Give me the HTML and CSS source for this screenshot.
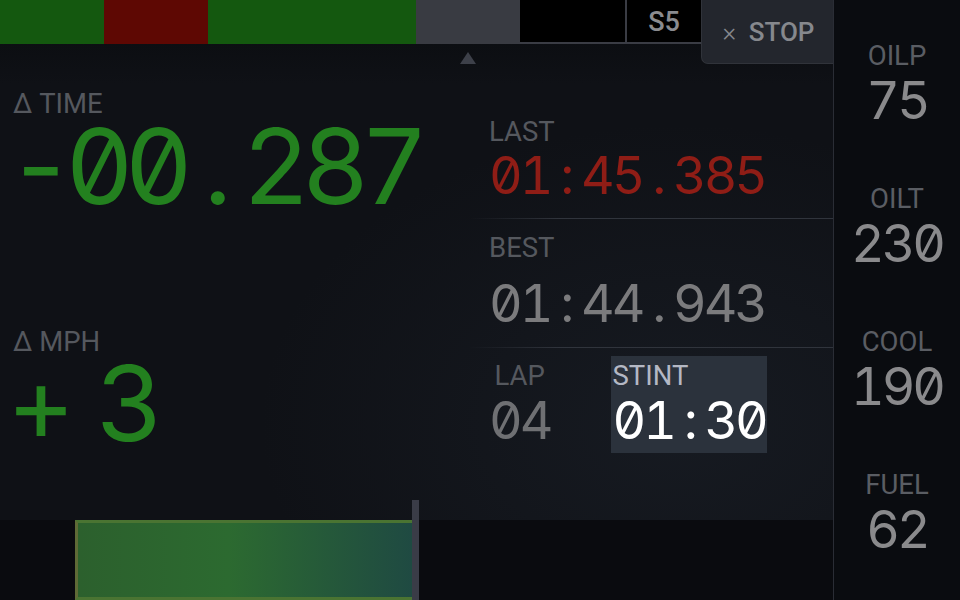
FILE: index.html
```html
<!DOCTYPE html>
<html lang="en">
<head>
    <meta charset="UTF-8">
    <meta name="viewport" content="width=device-width, initial-scale=1.0">
    <title>Lap Timer</title>
    <link rel="stylesheet" href="styles.css">
</head>
<body>
    <div class="dash">
        <div class="left">
            <div class="topbar">
                <div class="seg green" style="width: 104px;"></div>
                <div class="seg red" style="width: 104px;"></div>
                <div class="seg green" style="width: 208px;"></div>
                <div class="seg gray" style="width: 104px;"></div>
                <div class="seg empty" style="width: 107px;"></div>
                <div class="seg sector">S5</div>
                <button class="stop"><span class="x">×</span> STOP</button>
            </div>

            <div class="main">
                <span class="caret"></span>

                <div class="deltas">
                    <div class="delta">
                        <div class="label">Δ TIME</div>
                        <div class="big num"><span class="p">-</span>00<span class="p">.</span>287</div>
                    </div>
                    <div class="delta mph">
                        <div class="label">Δ MPH</div>
                        <div class="big num plus">+3</div>
                    </div>
                </div>

                <div class="times">
                    <div class="row last">
                        <div class="label">LAST</div>
                        <div class="time num red-text">01<span class="p">:</span>45<span class="p">.</span>385</div>
                    </div>
                    <div class="row best">
                        <div class="label">BEST</div>
                        <div class="time num">01<span class="p">:</span>44<span class="p">.</span>943</div>
                    </div>
                    <div class="row split">
                        <div class="lap">
                            <div class="label">LAP</div>
                            <div class="time num dim">04</div>
                        </div>
                        <div class="stint">
                            <div class="label">STINT</div>
                            <div class="time num">01<span class="p">:</span>30</div>
                        </div>
                    </div>
                </div>
            </div>

            <div class="bottom">
                <div class="fill" style="width: 337px;"></div>
                <span class="marker"></span>
            </div>
        </div>

        <aside class="gauges">
            <div class="gauge">
                <div class="label">OILP</div>
                <div class="val num">75</div>
            </div>
            <div class="gauge">
                <div class="label">OILT</div>
                <div class="val num">230</div>
            </div>
            <div class="gauge">
                <div class="label">COOL</div>
                <div class="val num">190</div>
            </div>
            <div class="gauge">
                <div class="label">FUEL</div>
                <div class="val num">62</div>
            </div>
        </aside>
    </div>
</body>
</html>
```

FILE: styles.css
```css
body {
    margin: 0;
    width: 960px;
    height: 600px;
    overflow: hidden;
    background-color: #0f1116;
    font-family: Roboto, "Liberation Sans", sans-serif;
}
.dash {
    display: flex;
    height: 600px;
}
.left {
    width: 833px;
    display: flex;
    flex-direction: column;
}

/* sector bar */
.topbar {
    height: 44px;
    display: flex;
    flex-shrink: 0;
    position: relative;
    z-index: 2;
}
.seg {
    height: 44px;
    box-sizing: border-box;
}
.green { background-color: #14580f; }
.red { background-color: #5e0803; }
.gray { background-color: #393b42; }
.empty {
    background-color: #000;
    border-bottom: 2px solid #3a3c44;
    border-right: 2px solid #3a3c44;
}
.sector {
    width: 74px;
    background-color: #000;
    border-bottom: 2px solid #3a3c44;
    color: #8a8b8f;
    font-size: 27px;
    font-weight: 500;
    text-align: center;
    line-height: 44px;
    padding-bottom: 2px;
}
.stop {
    width: 132px;
    height: 64px;
    background-color: #23262d;
    border: none;
    border-left: 1px solid #30333a;
    border-bottom: 1px solid #30333a;
    border-bottom-left-radius: 7px;
    color: #86888d;
    font-family: Roboto, sans-serif;
    font-weight: 500;
    font-size: 26px;
    padding: 0 0 0 2px;
    cursor: pointer;
}
.stop .x {
    font-weight: 300;
    margin-right: 6px;
}

/* main panel */
.main {
    flex: 1;
    display: grid;
    grid-template-columns: 470px 1fr;
    position: relative;
    background:
        radial-gradient(ellipse 420px 300px at 680px 380px, rgba(40, 48, 60, 0.3), transparent),
        linear-gradient(180deg, #0c0e12 0, #0f1116 40px);
}
.caret {
    position: absolute;
    left: 460px;
    top: 8px;
    border-left: 8px solid transparent;
    border-right: 8px solid transparent;
    border-bottom: 12px solid #3d4049;
}
.label {
    font-size: 27.5px;
    line-height: 20px;
    color: #55585e;
}
.num {
    font-family: Inter, "DejaVu Sans Mono", monospace;
    font-feature-settings: "tnum" 1, "zero" 1;
    line-height: 1;
    white-space: nowrap;
}
.p {
    display: inline-block;
    width: 0.587em;
    text-align: center;
}
.deltas {
    padding: 50px 0 0 13px;
}
.big {
    font-size: 105px;
    line-height: 0.86;
    letter-spacing: -9px;
    margin: 7px 0 0 -6px;
    color: #23801f;
}
.big .p {
    width: 0.558em;
}
.delta.mph {
    margin-top: 121px;
}
.plus {
    letter-spacing: 21px;
    margin-top: 6px;
}

.times {
    display: flex;
    flex-direction: column;
}
.row {
    padding-left: 19px;
}
.row + .row {
    border-top: 1px solid;
    border-image: linear-gradient(90deg, rgba(48, 52, 60, 0) 0, #30343c 90px) 1;
}
.time {
    font-size: 52px;
    letter-spacing: -3px;
    color: #7b7b7d;
}
.red-text { color: #8f1d16; }
.dim { color: #6f7073; }
.last {
    height: 174px;
    box-sizing: border-box;
    padding-top: 78px;
}
.last .time { margin-top: 8px; }
.best {
    height: 129px;
    box-sizing: border-box;
    padding-top: 19px;
}
.best .time { margin-top: 20px; }
.split {
    display: flex;
    align-items: flex-start;
    padding-top: 8px;
}
.lap {
    text-align: center;
    padding-top: 10px;
}
.lap .time { margin-top: 9px; }
.stint {
    margin-left: 61px;
    background-color: #2b323c;
    padding: 10px 1px 6px 1px;
}
.stint .label { color: #b4b8c4; }
.stint .time {
    color: #fff;
    margin-top: 9px;
}

/* progress strip */
.bottom {
    height: 80px;
    flex-shrink: 0;
    background-color: #0a0b0f;
    position: relative;
    padding-left: 75px;
}
.fill {
    height: 80px;
    box-sizing: border-box;
    border: 3px solid #4a7432;
    border-right: none;
    border-left-color: #5f6a36;
    background: linear-gradient(90deg, #2c602d 0, #2c6a30 45%, #1f4a42 100%);
}
.marker {
    position: absolute;
    left: 412px;
    top: -20px;
    width: 7px;
    height: 100px;
    background-color: #3a3c47;
}

/* gauges */
.gauges {
    width: 126px;
    border-left: 1px solid #2a2d35;
    background-color: #0a0c10;
    padding-top: 46px;
}
.gauge {
    height: 143px;
    text-align: center;
}
.gauge .label {
    color: #5a5d63;
}
.gauge .val {
    font-size: 52px;
    letter-spacing: -3px;
    margin-top: 9px;
    color: #8a8a8c;
}
```
